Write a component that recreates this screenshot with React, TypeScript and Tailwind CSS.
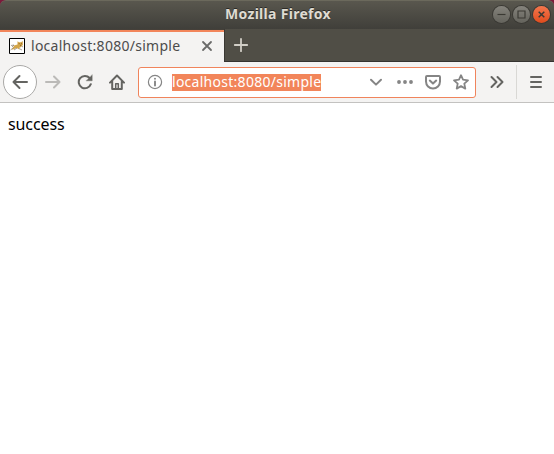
import React from "react";

const stroke = {
  fill: "none",
  stroke: "currentColor",
  strokeWidth: 2,
  strokeLinecap: "round" as const,
  strokeLinejoin: "round" as const,
};

function Icon({ children, className = "" }: { children: React.ReactNode; className?: string }) {
  return (
    <svg viewBox="0 0 16 16" className={`block size-4 shrink-0 ${className}`} {...stroke}>
      {children}
    </svg>
  );
}

function TitleBar() {
  return (
    <div className="bg-[#7c1a3b]">
      <header className="flex h-[29px] items-center rounded-t-[6px] border-t border-[#6b695c] bg-gradient-to-b from-[#59574e] to-[#403f3a] pr-1 pb-[2px]">
        <div className="w-[63px]" />
        <h1 className="flex-1 text-center text-[14px] leading-none font-bold tracking-[0.3px] text-[#dfdbd2] [text-shadow:0_-1px_0_#2b2a26]">
          Mozilla Firefox
        </h1>
        <div className="flex w-[57px] gap-[3px]">
          <WindowButton>
            <path d="M4.5 8.5h8" />
          </WindowButton>
          <WindowButton>
            <path d="M5 5h7v7H5z" />
          </WindowButton>
          <WindowButton close>
            <path d="M5.7 5.7l5.6 5.6M11.3 5.7l-5.6 5.6" strokeWidth="1.5" />
          </WindowButton>
        </div>
      </header>
    </div>
  );
}

function WindowButton({ children, close = false }: { children: React.ReactNode; close?: boolean }) {
  const fill = close ? "from-[#f4764c] to-[#df4b1b]" : "from-[#85837c] to-[#64635c]";
  return (
    <button className={`size-[17px] rounded-full bg-gradient-to-b shadow-[0_0_0_1px_#3a3934] ${fill}`}>
      <svg viewBox="0 0 17 17" className="block size-[17px]" fill="none" stroke="#3a3933" strokeWidth="1.15">
        {children}
      </svg>
    </button>
  );
}

function TomcatIcon() {
  return (
    <svg viewBox="0 0 16 16" className="block size-4 shrink-0">
      <path d="M.5.5h15v15H.5z" fill="#fff" stroke="#000" />
      <path d="M5 7.5l3.5-1V3.2L10 4.3h2L13.8 3v4L12 9l-2 1 .5 1.5-3-1.5L4 11.5H2.5l2-2.5z" fill="#d4a649" />
      <path d="M1.5 12l3-2.5M2 7.5L5 7l-2 2M5 12l3-2M10 10.5l3 1.5M12.5 8l1.5 1" fill="none" stroke="#85786a" strokeWidth=".7" />
      <path d="M9.7 5.7h1M12 5.7h1M11 7.3h1" stroke="#6d451a" strokeWidth=".7" />
    </svg>
  );
}

function TabStrip() {
  return (
    <div className="flex h-[33px] border-b border-[#353330] bg-[#504e46]">
      <div className="flex h-[33px] w-[224px] shrink-0 flex-col border-t border-[#454039] bg-[#f4f3f2]">
        <div className="h-[2px] shrink-0 bg-[#f2855a]" />
        <div className="flex flex-1 items-center pr-[9px] pb-[3px] pl-[9px] text-[#4c4c4c]">
          <TomcatIcon />
          <span className="ml-[6px] w-[164px] text-[14px] leading-5 tracking-[0.27px] whitespace-nowrap">
            localhost:8080/simple
          </span>
          <Icon className="ml-[4px] text-[#6a6a69]">
            <path d="M4 4l8 8M12 4l-8 8" strokeWidth="1.8" />
          </Icon>
        </div>
      </div>
      <div className="flex items-center border-l border-[#3a3833] pl-2 text-[#d1cec6]">
        <Icon>
          <path d="M8 1.8v12.4M1.8 8h12.4" strokeWidth="1.8" />
        </Icon>
      </div>
    </div>
  );
}

function AddressBar() {
  return (
    <div className="ml-[13px] flex h-[31px] w-[338px] items-center rounded-[3px] border border-[#f0845c] bg-white text-[#858585]">
      <Icon className="ml-2">
        <circle cx="8" cy="8" r="6.6" strokeWidth="1.2" />
        <path d="M8 7.5v4M8 4.6v.1" strokeWidth="1.9" />
      </Icon>
      <span className="ml-[9px] h-[17px] bg-[#f2855a] text-[14px] leading-[15px] tracking-[0.27px] whitespace-nowrap text-white">
        localhost:8080/simple
      </span>
      <div className="mr-[6px] ml-auto flex items-center">
        <Icon>
          <path d="M3 5.8l5 4.8 5-4.8" />
        </Icon>
        <Icon className="ml-[13px]">
          <path d="M2 8h.01M8 8h.01M14 8h.01" strokeWidth="3.8" />
        </Icon>
        <Icon className="ml-[12px]">
          <path d="M2 2h12a1 1 0 0 1 1 1v4.5a7 7 0 0 1-14 0V3a1 1 0 0 1 1-1z" />
          <path d="M4.8 6.6L8 9.6l3.2-3" />
        </Icon>
        <Icon className="ml-[12px]">
          <path d="M8 1.2l2 4.5 5 .6-3.7 3.3 1 5L8 12.1l-4.3 2.5 1-5L1 6.3l5-.6z" strokeWidth="1.8" />
        </Icon>
      </div>
    </div>
  );
}

function Toolbar() {
  return (
    <nav className="flex h-[41px] items-center border-b border-[#c3c2c0] bg-[#f4f3f2] pl-[3px] text-[#646461]">
      <button className="flex size-[34px] shrink-0 items-center justify-center rounded-full border border-[#aaa9a7] bg-white">
        <Icon>
          <path d="M15 8H1.5M7.5 2L1.5 8l6 6" />
        </Icon>
      </button>
      <Icon className="ml-[8px] text-[#bbbab8]">
        <path d="M1 8h13.5M9 2.5L14.5 8 9 13.5" />
      </Icon>
      <Icon className="ml-4">
        <path d="M13.8 10.2A6.2 6.2 0 1 1 12.6 4" />
        <path d="M15.2 1v5.8H9.4z" fill="currentColor" strokeWidth=".4" />
      </Icon>
      <Icon className="ml-4">
        <path d="M1 8.6L8 1.5l7 7.1M3.2 7.5V15h9.6V7.5" />
        <path d="M6.7 14.5V9.7h2.6v4.8" strokeWidth="1.5" />
      </Icon>
      <AddressBar />
      <Icon className="ml-[13px]">
        <path d="M2.5 3l5 5-5 5M8.5 3l5 5-5 5" />
      </Icon>
      <div className="ml-[11px] h-[34px] w-px bg-[#d9d8d5]" />
      <Icon className="ml-[11px]">
        <path d="M3 3h10M3 8h10M3 13h10" />
      </Icon>
    </nav>
  );
}

export default function App() {
  return (
    <div className="flex h-[454px] w-[554px] flex-col overflow-hidden bg-white font-['Noto_Sans','Open_Sans',sans-serif]">
      <TitleBar />
      <TabStrip />
      <Toolbar />
      <main className="flex-1 bg-white px-2 pt-[10px] text-[16px] leading-[22px] tracking-[-0.1px] text-black">success</main>
    </div>
  );
}
